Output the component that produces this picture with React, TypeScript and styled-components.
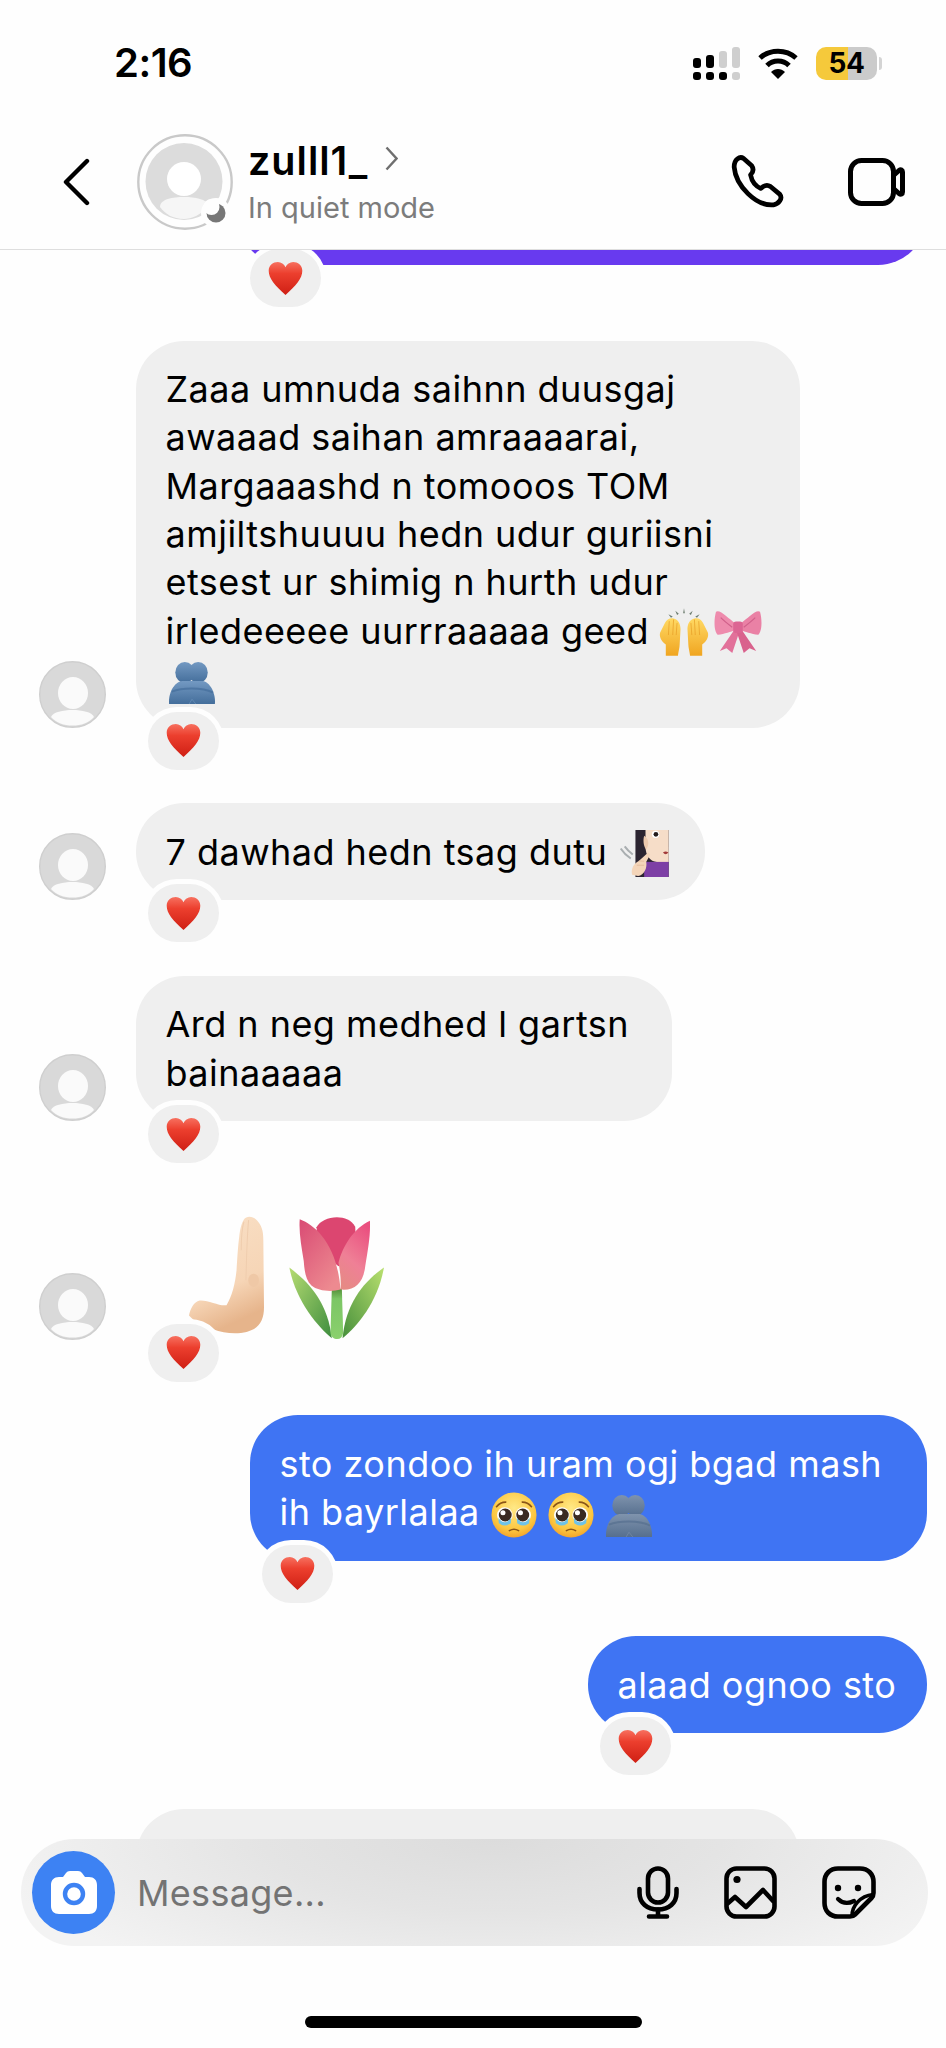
import React from "react";
import styled, { createGlobalStyle } from "styled-components";

const Global = createGlobalStyle`
  html, body { margin: 0; padding: 0; background: #fefefe; }
  * { box-sizing: border-box; }
`;

const SANS = `Inter, "Liberation Sans", Arial, sans-serif`;

const Page = styled.div`
  position: relative;
  width: 946px;
  height: 2048px;
  overflow: hidden;
  display: flex;
  flex-direction: column;
  background: #fefefe;
  font-family: ${SANS};
  color: #000;
`;

const StatusBar = styled.div`
  height: 126px;
  flex: none;
  display: flex;
  align-items: center;
  justify-content: space-between;
  padding: 0 69px 0 114px;
`;
const Clock = styled.div`
  font-size: 40px;
  font-weight: 600;
  letter-spacing: -0.5px;
  line-height: 1;
`;
const StatusIcons = styled.div`
  display: flex;
  align-items: center;
  gap: 18px;
`;
const Battery = styled.div`
  position: relative;
  width: 61px;
  height: 33px;
  border-radius: 10px;
  background: linear-gradient(90deg, #f5c93b 0 52%, #cbcbcb 52% 100%);
  display: flex;
  align-items: center;
  justify-content: center;
  font-size: 28px;
  font-weight: 700;
  letter-spacing: -0.3px;
  &::after {
    content: "";
    position: absolute;
    right: -5px;
    top: 10px;
    width: 3px;
    height: 13px;
    border-radius: 0 3px 3px 0;
    background: #d4d4d4;
  }
`;

const Header = styled.header`
  height: 124px;
  flex: none;
  display: flex;
  align-items: center;
  padding: 0 41px 12px 63px;
  border-bottom: 1.5px solid #dedede;
`;
const TitleBlock = styled.div`
  display: flex;
  flex-direction: column;
  margin-left: 15px;
  flex: 1;
`;
const NameLine = styled.div`
  display: flex;
  align-items: flex-start;
  gap: 17px;
  height: 48px;
`;
const Name = styled.span`
  font-size: 39.5px;
  font-weight: 600;
  line-height: 48px;
  letter-spacing: 1px;
`;
const Subtitle = styled.span`
  font-size: 29px;
  line-height: 36px;
  margin-top: 5px;
  color: #7c7c7c;
`;
const HeaderActions = styled.div`
  display: flex;
  align-items: center;
  gap: 64px;
`;
const BackIcon = styled.svg`
  flex: none;
  margin-right: 47px;
`;
const NameChevron = styled.svg`
  margin-top: 9px;
`;
const HeaderAvatar = styled.svg`
  flex: none;
`;

const Chat = styled.main`
  flex: 1;
  overflow: hidden;
  display: flex;
  flex-direction: column;
  gap: 75.5px;
`;
const Row = styled.div`
  display: flex;
  align-items: flex-end;
  gap: 30px;
  padding-left: 39px;
`;
const Avatar = styled.svg`
  flex: none;
  display: block;
`;
const Bubble = styled.div<{ $w: number; $tone: "in" | "out" }>`
  position: relative;
  flex: none;
  width: ${(p) => p.$w}px;
  padding: 24.3px 0 24.3px 29.5px;
  border-radius: 48px;
  font-size: 36px;
  line-height: 48.4px;
  white-space: nowrap;
  letter-spacing: 0.47px;
  background: ${(p) => (p.$tone === "in" ? "#efefef" : "#3f74f3")};
  color: ${(p) => (p.$tone === "in" ? "#000" : "#fff")};
  ${(p) => p.$tone === "out" && "align-self: flex-end; margin-right: 19px;"}
`;
const CutBubble = styled.div`
  position: relative;
  flex: none;
  width: 688px;
  height: 97px;
  margin: -82px 0 0 238px;
  border-radius: 48px;
  background: #683aef;
`;
const NextBubble = styled.div`
  flex: none;
  width: 664px;
  height: 100px;
  margin-left: 136px;
  border-radius: 48px;
  background: #efefef;
`;
const EmojiMessage = styled.div`
  position: relative;
  flex: none;
  width: 260px;
  height: 143px;
  display: flex;
  align-items: flex-start;
  gap: 25px;
  padding: 19px 0 0 53px;
`;
const BigGlyph = styled.svg`
  flex: none;
`;
const Reaction = styled.div`
  position: absolute;
  left: 12px;
  bottom: -42px;
  width: 71px;
  height: 58px;
  border-radius: 29px;
  background: #efefef;
  box-shadow: 0 0 0 5px #fefefe;
  display: flex;
  align-items: center;
  justify-content: center;
`;
const Glyph = styled.svg<{ $drop?: number; $gap?: number }>`
  display: inline-block;
  vertical-align: ${(p) => 24 - (p.$drop ?? 12)}px;
  margin: -24px 0 -24px ${(p) => p.$gap ?? 0}px;
`;

const Composer = styled.div`
  position: absolute;
  left: 21px;
  top: 1839px;
  width: 907px;
  height: 107px;
  border-radius: 54px;
  display: flex;
  align-items: center;
  padding: 0 52px 0 11px;
  background: radial-gradient(ellipse 56% 150% at 52% 0%, #dcdcdc 0%, #e4e4e4 45%, #f3f3f3 100%);
`;
const CameraButton = styled.div`
  width: 83px;
  height: 83px;
  border-radius: 50%;
  background: #3d82f3;
  flex: none;
  display: flex;
  align-items: center;
  justify-content: center;
`;
const Placeholder = styled.div`
  flex: 1;
  margin-left: 22px;
  font-size: 36px;
  color: #737373;
  letter-spacing: 0.3px;
`;
const ComposerActions = styled.div`
  display: flex;
  align-items: center;
  gap: 45px;
`;
const HomeBar = styled.div`
  position: absolute;
  left: 305px;
  bottom: 20px;
  width: 337px;
  height: 12px;
  border-radius: 6px;
  background: #000;
`;

const Heart = () => (
  <svg width="35" height="35" viewBox="0 0 100 100">
    <defs>
      <linearGradient id="heartFill" x1="0" y1="0" x2="0" y2="1">
        <stop offset="0" stopColor="#f7705f" />
        <stop offset="0.35" stopColor="#ec3f2e" />
        <stop offset="1" stopColor="#cf1f14" />
      </linearGradient>
    </defs>
    <path
      d="M50 97C20 70 2 50 2 28C2 12 15 3 28 3C38 3 46 9 50 18C54 9 62 3 72 3C85 3 98 12 98 28C98 50 80 70 50 97Z"
      fill="url(#heartFill)"
    />
  </svg>
);

const Hug = ({ top, bottom, id }: { top: string; bottom: string; id: string }) => (
  <>
    <defs>
      <linearGradient id={id} x1="0" y1="0" x2="0" y2="1">
        <stop offset="0" stopColor={top} />
        <stop offset="1" stopColor={bottom} />
      </linearGradient>
    </defs>
    <ellipse cx="35" cy="22" rx="20" ry="22" fill={`url(#${id})`} />
    <ellipse cx="63" cy="22" rx="20" ry="22" fill={`url(#${id})`} />
    <path d="M2 88C0 66 12 42 30 40L72 40C88 42 100 66 98 88Z" fill={`url(#${id})`} />
    <path d="M8 62C28 54 70 52 94 64" fill="none" stroke={bottom} strokeWidth="4" opacity="0.7" />
    <path d="M44 88L50 78L58 88" fill="none" stroke={top} strokeWidth="2" opacity="0.6" />
  </>
);

const RaisedHands = () => (
  <Glyph width="52" height="48" viewBox="0 0 120 110" $gap={9}>
    <defs>
      <linearGradient id="handsFill" x1="0" y1="0" x2="0" y2="1">
        <stop offset="0" stopColor="#ffd964" />
        <stop offset="1" stopColor="#f0a520" />
      </linearGradient>
    </defs>
    <path d="M58 12L60 0L62 12ZM44 16L40 6L48 13ZM76 16L80 6L72 13ZM30 22L24 14L34 19ZM90 22L96 14L86 19Z" fill="#6d7d70" />
    <path
      d="M18 110L18 84C8 76 2 66 5 56L16 34C20 26 28 22 36 24C46 26 52 36 52 48L50 84C50 92 47 100 46 110Z"
      fill="url(#handsFill)"
    />
    <path
      d="M102 110L102 84C112 76 118 66 115 56L104 34C100 26 92 22 84 24C74 26 68 36 68 48L70 84C70 92 73 100 74 110Z"
      fill="url(#handsFill)"
    />
    <path d="M26 30L24 62M36 26L34 62M44 34L42 62M94 30L96 62M84 26L86 62M76 34L78 62" stroke="#e79d24" strokeWidth="1.6" fill="none" />
  </Glyph>
);

const Bow = () => (
  <Glyph width="48" height="45" viewBox="0 0 100 94" $gap={4} $drop={9}>
    <path d="M42 46L12 90L26 84L38 94L52 52Z" fill="#e2719a" />
    <path d="M58 46L88 90L74 84L62 94L48 52Z" fill="#d9628d" />
    <path d="M44 32C30 22 12 2 4 8C-1 26 0 50 8 56C22 54 36 50 44 46Z" fill="#ee8bad" />
    <path d="M56 32C70 22 88 2 96 8C101 26 100 50 92 56C78 54 64 50 56 46Z" fill="#ea81a5" />
    <path d="M14 20C22 28 30 34 38 40" stroke="#d0608a" strokeWidth="2.5" fill="none" />
    <path d="M86 20C78 28 70 34 62 40" stroke="#d0608a" strokeWidth="2.5" fill="none" />
    <rect x="40" y="28" width="20" height="24" rx="6" fill="#dc6593" />
  </Glyph>
);

const DeafWoman = () => (
  <Glyph width="49" height="47" viewBox="190 55 146 140" $gap={13} $drop={12}>
    <path d="M192 110Q204 128 222 140M204 104Q214 118 228 128" stroke="#a9aeb0" strokeWidth="6" fill="none" />
    <rect x="236" y="55" width="99" height="140" fill="#2b2430" />
    <path d="M266 55H335V150H300C280 150 266 130 266 105Z" fill="#f6ddc8" />
    <path d="M262 150H335V195H262Z" fill="#7d3fa5" />
    <circle cx="296" cy="68" r="11" fill="#fff" />
    <circle cx="297" cy="68" r="7" fill="#241b1b" />
    <path d="M318 122Q326 116 334 122Q326 132 318 122Z" fill="#a33a3a" />
    <path d="M226 188C222 168 232 155 246 147L274 122L280 128L268 150C272 166 262 190 244 192Z" fill="#f4d5b9" />
    <path d="M246 147L262 148M240 160L262 160" stroke="#dcb392" strokeWidth="2" />
    <path d="M262 72C276 80 278 100 268 112C260 106 258 84 262 72Z" fill="#ecc9ad" />
  </Glyph>
);

const Pleading = ({ gap, id }: { gap: number; id: string }) => (
  <Glyph width="46" height="46" viewBox="0 0 100 100" $gap={gap} $drop={13}>
    <defs>
      <radialGradient id={id} cx="0.5" cy="0.35" r="0.75">
        <stop offset="0" stopColor="#ffe987" />
        <stop offset="0.65" stopColor="#fcc63f" />
        <stop offset="1" stopColor="#ee9020" />
      </radialGradient>
    </defs>
    <ellipse cx="50" cy="50" rx="49" ry="49" fill={`url(#${id})`} />
    <path d="M12 32Q20 22 32 22M88 32Q80 22 68 22" stroke="#8a5518" strokeWidth="3.5" fill="none" strokeLinecap="round" />
    <circle cx="30" cy="50" r="17" fill="#fff" />
    <circle cx="70" cy="50" r="17" fill="#fff" />
    <circle cx="31" cy="50" r="14" fill="#3a2a22" />
    <circle cx="69" cy="50" r="14" fill="#3a2a22" />
    <circle cx="26" cy="45" r="5.5" fill="#fff" />
    <circle cx="64" cy="45" r="5.5" fill="#fff" />
    <path d="M16 56Q30 76 44 56L43 68Q30 78 17 68Z" fill="#6fc3e8" />
    <path d="M56 56Q70 76 84 56L83 68Q70 78 57 68Z" fill="#6fc3e8" />
    <path d="M40 84Q50 78 60 84" stroke="#8a5518" strokeWidth="3.5" fill="none" strokeLinecap="round" />
  </Glyph>
);

const PushingHand = () => (
  <BigGlyph width="75" height="118" viewBox="268 108 224 352">
    <defs>
      <linearGradient id="pushFill" x1="0" y1="0" x2="0.3" y2="1">
        <stop offset="0" stopColor="#f9e0c6" />
        <stop offset="0.7" stopColor="#f6d5b6" />
        <stop offset="1" stopColor="#e6b48b" />
      </linearGradient>
    </defs>
    <path
      d="M432 118C440 106 462 108 472 122C484 136 490 150 490 180L492 380C492 420 476 445 440 454C410 462 370 458 340 446C310 436 285 425 268 405C272 385 282 364 300 360C325 358 360 378 380 374C396 350 406 310 410 270C412 240 414 200 418 170C420 150 424 130 432 118Z"
      fill="url(#pushFill)"
    />
    <path d="M432 125C426 145 424 170 424 210M446 120C442 160 440 220 438 300" stroke="#efcdae" strokeWidth="3" fill="none" />
    <ellipse cx="461" cy="300" rx="16" ry="20" fill="#efc8a6" />
  </BigGlyph>
);

const Tulip = () => (
  <BigGlyph width="95" height="123" viewBox="568 100 284 368">
    <defs>
      <linearGradient id="leafL" x1="0" y1="0" x2="1" y2="1">
        <stop offset="0" stopColor="#b6dc72" />
        <stop offset="1" stopColor="#3d8d3e" />
      </linearGradient>
      <linearGradient id="leafR" x1="1" y1="0" x2="0" y2="1">
        <stop offset="0" stopColor="#b9e06f" />
        <stop offset="1" stopColor="#468f3b" />
      </linearGradient>
      <linearGradient id="stem" x1="0" y1="0" x2="0" y2="1">
        <stop offset="0" stopColor="#548f3a" />
        <stop offset="0.2" stopColor="#7cc665" />
        <stop offset="1" stopColor="#8ad06d" />
      </linearGradient>
      <linearGradient id="petalL" x1="0" y1="0" x2="0.7" y2="1">
        <stop offset="0" stopColor="#d94b74" />
        <stop offset="1" stopColor="#ed8a90" />
      </linearGradient>
      <linearGradient id="petalR" x1="0.7" y1="0" x2="0.3" y2="1">
        <stop offset="0" stopColor="#ea4f7f" />
        <stop offset="0.6" stopColor="#ef8096" />
        <stop offset="1" stopColor="#e68a85" />
      </linearGradient>
    </defs>
    <path d="M569 254C630 300 684 360 696 466C655 432 588 355 569 254Z" fill="url(#leafL)" />
    <path d="M852 254C792 296 738 360 728 466C776 426 834 355 852 254Z" fill="url(#leafR)" />
    <path d="M696 318H726L730 450C728 462 722 468 712 468C702 468 694 462 692 450Z" fill="url(#stem)" />
    <path d="M650 134C668 98 744 90 766 132L770 210L716 250L660 205Z" fill="#dc4670" />
    <path d="M600 110C652 130 712 190 722 320C695 328 655 325 635 308C618 292 614 265 612 235C605 190 597 150 600 110Z" fill="url(#petalL)" />
    <path d="M810 114C762 136 728 190 716 240C722 270 724 300 722 320C765 324 790 302 796 250C804 200 812 160 810 114Z" fill="url(#petalR)" />
  </BigGlyph>
);

const PersonAvatar = () => (
  <Avatar width="67" height="67" viewBox="0 0 67 67">
    <circle cx="33.5" cy="33.5" r="32.8" fill="#d9d9d9" stroke="#cfcfcf" strokeWidth="1.4" />
    <ellipse cx="34" cy="32" rx="15" ry="16" fill="#fafafa" />
    <path d="M12 56C14 51 24 49 33.5 49C43 49 53 51 55 56C50 62 42 64.5 33.5 64.5C25 64.5 17 62 12 56Z" fill="#fafafa" />
  </Avatar>
);

const Msg = ({ w, children }: { w: number; children: React.ReactNode }) => (
  <Row>
    <PersonAvatar />
    <Bubble $w={w} $tone="in">
      {children}
      <Reaction>
        <Heart />
      </Reaction>
    </Bubble>
  </Row>
);

export default function App() {
  return (
    <Page>
      <Global />
      <StatusBar>
        <Clock>2:16</Clock>
        <StatusIcons>
          <svg width="48" height="34" viewBox="0 0 48 34">
            <rect x="1" y="12" width="8" height="10" rx="3" />
            <rect x="14" y="9" width="8" height="13" rx="3" />
            <rect x="27" y="5" width="8" height="17" rx="3" fill="#cfcfcf" />
            <rect x="40" y="1" width="8" height="21" rx="3" fill="#cfcfcf" />
            <rect x="1" y="26" width="8" height="8" rx="3" />
            <rect x="14" y="26" width="8" height="8" rx="3" />
            <rect x="27" y="26" width="8" height="8" rx="3" />
            <rect x="40" y="26" width="8" height="8" rx="3" fill="#cfcfcf" />
          </svg>
          <svg width="40" height="31" viewBox="0 0 40 31">
            <path d="M2 10C12 1 28 1 38 10" fill="none" stroke="#000" strokeWidth="5" />
            <path d="M9 17.5C15 11.5 25 11.5 31 17.5" fill="none" stroke="#000" strokeWidth="5" />
            <path d="M20 31L13 24C17 20 23 20 27 24Z" />
          </svg>
          <Battery>54</Battery>
        </StatusIcons>
      </StatusBar>

      <Header>
        <BackIcon width="27" height="48" viewBox="0 0 27 48">
          <path d="M24 3L3 24L24 45" fill="none" stroke="#000" strokeWidth="4.4" strokeLinecap="round" strokeLinejoin="round" />
        </BackIcon>
        <HeaderAvatar width="96" height="96" viewBox="0 0 96 96">
          <circle cx="48" cy="48" r="46.7" fill="none" stroke="#c9c9c9" strokeWidth="2.4" />
          <circle cx="47" cy="47.5" r="38.5" fill="#dcdcdc" />
          <circle cx="47" cy="45" r="17" fill="#fff" />
          <path d="M23 73C23 65 36 63 47 63C58 63 70 65 72 72C64 81 54 85 47 85C36 85 28 80 23 73Z" fill="#f6f6f6" />
          <circle cx="79" cy="79" r="15" fill="#fefefe" />
          <circle cx="79" cy="79" r="9.5" fill="#777" />
          <circle cx="74.5" cy="73" r="8" fill="#fefefe" />
        </HeaderAvatar>
        <TitleBlock>
          <NameLine>
            <Name>zulll1_</Name>
            <NameChevron width="13" height="25" viewBox="0 0 13 25">
              <path d="M1.5 1.5L11.5 12.5L1.5 23.5" fill="none" stroke="#6f6f6f" strokeWidth="2.4" />
            </NameChevron>
          </NameLine>
          <Subtitle>In quiet mode</Subtitle>
        </TitleBlock>
        <HeaderActions>
          <svg width="53" height="53" viewBox="150 372 168 168">
            <path
              d="M160 410C165 470 230 535 285 530C300 528 315 510 305 497L275 472C265 465 255 468 245 478C225 470 215 450 212 435C222 425 222 415 215 405L190 383C178 375 160 385 160 410Z"
              fill="none"
              stroke="#000"
              strokeWidth="15"
              strokeLinejoin="round"
            />
          </svg>
          <svg width="57" height="48" viewBox="0 0 57 48">
            <rect x="2.5" y="2.5" width="43" height="43" rx="11" fill="none" stroke="#000" strokeWidth="5" />
            <path d="M46 17L51 12.5C53 11 54.5 12 54.5 14V34C54.5 36 53 37 51 35.5L46 31" fill="none" stroke="#000" strokeWidth="5" strokeLinejoin="round" />
          </svg>
        </HeaderActions>
      </Header>

      <Chat>
        <CutBubble>
          <Reaction>
            <Heart />
          </Reaction>
        </CutBubble>

        <Msg w={664}>
          Zaaa umnuda saihnn duusgaj
          <br />
          awaaad saihan amraaaarai,
          <br />
          Margaaashd n tomooos TOM
          <br />
          amjiltshuuuu hedn udur guriisni
          <br />
          etsest ur shimig n hurth udur
          <br />
          irledeeeee uurrraaaaa geed
          <RaisedHands />
          <Bow />
          <br />
          <Glyph width="48" height="42" viewBox="0 0 100 88" $gap={2}>
            <Hug id="hugIn" top="#7399c2" bottom="#446e9b" />
          </Glyph>
        </Msg>

        <Msg w={569}>
          7 dawhad hedn tsag dutu
          <DeafWoman />
        </Msg>

        <Msg w={536}>
          Ard n neg medhed l gartsn
          <br />
          bainaaaaa
        </Msg>

        <Row>
          <PersonAvatar />
          <EmojiMessage>
            <PushingHand />
            <Tulip />
            <Reaction>
              <Heart />
            </Reaction>
          </EmojiMessage>
        </Row>

        <Bubble $w={677} $tone="out">
          sto zondoo ih uram ogj bgad mash
          <br />
          ih bayrlalaa
          <Pleading id="pleadA" gap={11} />
          <Pleading id="pleadB" gap={11} />
          <Glyph width="48" height="42" viewBox="0 0 100 88" $gap={11}>
            <Hug id="hugOut" top="#7f93ad" bottom="#566f8e" />
          </Glyph>
          <Reaction>
            <Heart />
          </Reaction>
        </Bubble>

        <Bubble $w={339} $tone="out">
          alaad ognoo sto
          <Reaction>
            <Heart />
          </Reaction>
        </Bubble>

        <NextBubble />
      </Chat>

      <Composer>
        <CameraButton>
          <svg width="46" height="43" viewBox="0 0 46 43">
            <path
              d="M8 6H12L15 2C16 .7 17 0 19 0H27C29 0 30 .7 31 2L34 6H38C43 6 46 9 46 14V35C46 40 43 43 38 43H8C3 43 0 40 0 35V14C0 9 3 6 8 6Z"
              fill="#fff"
            />
            <circle cx="23" cy="23" r="9" fill="none" stroke="#3d82f3" strokeWidth="4.4" />
          </svg>
        </CameraButton>
        <Placeholder>Message...</Placeholder>
        <ComposerActions>
          <svg width="42" height="53" viewBox="0 0 42 53">
            <rect x="11" y="2.5" width="20" height="34" rx="10" fill="none" stroke="#000" strokeWidth="4.6" />
            <path d="M2.5 23V27C2.5 37 10 43.5 21 43.5C32 43.5 39.5 37 39.5 27V23" fill="none" stroke="#000" strokeWidth="4.6" strokeLinecap="round" />
            <path d="M21 43.5V50M12 50.5H30" fill="none" stroke="#000" strokeWidth="4.6" strokeLinecap="round" />
          </svg>
          <svg width="53" height="53" viewBox="0 0 53 53">
            <rect x="2.5" y="2.5" width="48" height="48" rx="10" fill="none" stroke="#000" strokeWidth="4.6" />
            <circle cx="13" cy="13.5" r="3.6" />
            <path d="M3 38L11 31L22 41L39 24L50 36" fill="none" stroke="#000" strokeWidth="4.6" strokeLinejoin="round" />
          </svg>
          <svg width="54" height="53" viewBox="0 0 54 53">
            <path
              d="M16 2.5H38C46 2.5 51.5 8 51.5 16V27C51.5 29 51 30.5 49.5 32L33 48.5C31.5 50 30 50.5 28 50.5H16C8 50.5 2.5 45 2.5 37V16C2.5 8 8 2.5 16 2.5Z"
              fill="none"
              stroke="#000"
              strokeWidth="4.6"
              strokeLinejoin="round"
            />
            <path d="M30 50C30 40 38 30 51 28.5" fill="none" stroke="#000" strokeWidth="3.6" />
            <circle cx="16" cy="22" r="3.2" />
            <circle cx="36" cy="22" r="3.2" />
            <path d="M16 33C21 38 26 38 32 35" fill="none" stroke="#000" strokeWidth="4.2" strokeLinecap="round" />
          </svg>
        </ComposerActions>
      </Composer>
      <HomeBar />
    </Page>
  );
}
